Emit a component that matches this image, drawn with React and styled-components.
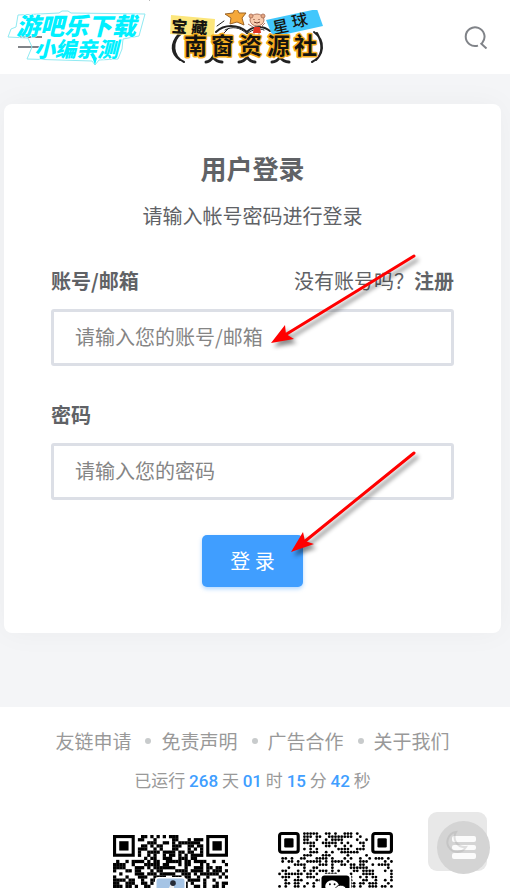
import React from "react";
import styled, { createGlobalStyle } from "styled-components";

const GlobalStyle = createGlobalStyle`
  *, *::before, *::after { box-sizing: border-box; }
  body {
    margin: 0;
    background: #fff;
    color: #606266;
    font-family: "Noto Sans CJK SC", sans-serif;
    font-size: 20px;
    line-height: 28px;
  }
  a { color: inherit; text-decoration: none; }
`;

const Page = styled.div`
  position: relative;
  display: flex;
  flex-direction: column;
  min-height: 100vh;
  overflow: hidden;
  background: #f4f5f7;
`;

const Header = styled.header`
  display: flex;
  align-items: center;
  justify-content: space-between;
  padding: 10px 22px 10px 18px;
  background: #fff;
`;

const IconButton = styled.button`
  display: flex;
  padding: 0;
  border: 0;
  background: none;
  color: #808388;
  cursor: pointer;
`;

const LogoLink = styled.a`
  display: flex;
`;

const Main = styled.main`
  padding: 30px 9px 74px 4px;
`;

const Card = styled.section`
  padding: 46px 47px;
  border-radius: 8px;
  background: #fff;
  box-shadow: 0 0 30px rgba(0, 0, 0, 0.04);
`;

const Title = styled.h1`
  margin: 0 0 16px;
  font-size: 26px;
  line-height: 36px;
  font-weight: 700;
  text-align: center;
`;

const Subtitle = styled.p`
  margin: 0 0 37px;
  text-align: center;
`;

const Form = styled.form`
  display: flex;
  flex-direction: column;
  gap: 35px;
`;

const Field = styled.div`
  display: flex;
  flex-direction: column;
  gap: 14px;
`;

const FieldHead = styled.div`
  display: flex;
  justify-content: space-between;
`;

const Label = styled.label`
  font-weight: 700;
`;

const RegisterLink = styled.a`
  font-weight: 700;
`;

const TextInput = styled.input`
  width: 100%;
  height: 57px;
  padding: 0 21px 2px;
  border: 3px solid #dcdfe6;
  border-radius: 3px;
  outline: 0;
  background: #fff;
  color: #606266;
  font: inherit;
  &::placeholder { color: #858585; opacity: 1; }
`;

const SubmitButton = styled.button`
  align-self: center;
  padding: 12px 28px;
  border: 0;
  border-radius: 5px;
  background: #409eff;
  box-shadow: 0 2px 4px rgba(64, 158, 255, 0.4);
  color: #fff;
  font: inherit;
  cursor: pointer;
`;

const Footer = styled.footer`
  flex: 1;
  padding: 20px 5px 0 0;
  background: #fff;
  color: #999;
`;

const FooterNav = styled.nav`
  display: flex;
  justify-content: center;
  align-items: center;
  font-size: 19px;
`;

const FooterLink = styled.a`
  display: flex;
  align-items: center;
  & + &::before {
    content: "";
    width: 6px;
    height: 6px;
    margin: 0 10px 0 14px;
    border-radius: 50%;
    background: #c8cbcc;
  }
`;

const Uptime = styled.p`
  margin: 13px 0 39px;
  font-size: 17px;
  line-height: 24px;
  text-align: center;
`;

const Count = styled.b`
  color: #409eff;
  font-family: Roboto, sans-serif;
  font-weight: 500;
`;

const Codes = styled.div`
  display: flex;
  justify-content: center;
  align-items: flex-end;
  gap: 50px;
`;

const CodeImage = styled.svg`
  display: block;
  width: 115px;
`;

const Watermark = styled.svg`
  position: absolute;
  top: 0;
  left: 0;
  pointer-events: none;
`;

const Arrow = styled.svg`
  position: absolute;
  top: ${(p) => p.$top}px;
  left: ${(p) => p.$left}px;
  overflow: visible;
  pointer-events: none;
  filter: drop-shadow(3px 4px 2px rgba(0, 0, 0, 0.45));
`;

const FloatingTools = styled.div`
  position: fixed;
  right: 20px;
  bottom: 14px;
`;

const ThemeButton = styled.button`
  display: block;
  width: 59px;
  height: 59px;
  margin: 0 3px 3px 0;
  padding: 0;
  border: 0;
  border-radius: 9px;
  background: #e8e8e8;
`;

const MenuBubble = styled.button`
  position: absolute;
  right: 0;
  bottom: 0;
  width: 53px;
  height: 53px;
  padding: 0;
  border: 0;
  border-radius: 50%;
  background: #d4d4d4;
`;

function SiteLogo() {
  return (
    <svg width="166" height="54" viewBox="170 10 166 54" role="img" aria-label="宝藏星球 南窗资源社">
      <g fill="none" stroke="#222" strokeWidth="2" strokeLinecap="round">
        <path d="M182 33C171 41 172 56 184 62M179 34C170 44 171 54 180 60" />
        <path d="M314 32C326 41 324 56 312 62M317 33C323 44 323 53 316 60" />
        <path d="M216 32C224 24 238 24 247 32C252 26 263 25 270 31" />
        <path d="M225 30C232 26 240 27 247 34C252 29 260 28 264 30M217 26L224 21M223 34L228 29" strokeWidth="1" />
        <path d="M206 62C209 62 211 60 213 57C215 60 218 62 222 62M239 62C243 62 245 60 247 57C249 60 252 62 255 62M272 62C276 62 278 60 280 57C282 60 286 62 289 62" strokeWidth="3" />
      </g>
      <path d="M236 7L239 13L246 13L242 18L244 25L237 22L230 24L231 18L225 14L233 13Z" fill="#f5a83a" stroke="#9c6426" />
      <g stroke="#b37960" strokeWidth="1" fill="none">
        <path d="M253 27l-5-3M261 27l4-4M254 32v3M259 32v3" />
        <ellipse cx="257" cy="20" rx="7" ry="6" fill="#f8cbad" />
        <circle cx="251" cy="16" r="2" fill="#e7a782" />
        <circle cx="263" cy="16" r="2" fill="#e7a782" />
        <path d="M254 22q3 2 6 0M254 19v1M259 19v1" stroke="#743c2c" />
      </g>
      <path d="M254 27h6l1 6h-8Z" fill="#e33422" />
      <path d="M171 15L215 19L214 37L170 34Z" fill="#fce67c" />
      <path d="M266 20L317 9L323 26L273 37Z" fill="#42c7fc" />
      <g fontFamily='"Noto Sans CJK SC", sans-serif' fontWeight="900" fill="#16140f">
        <text x="171" y="32" fontSize="16" transform="rotate(4 171 32)">宝</text>
        <text x="191" y="33" fontSize="16" transform="rotate(4 191 33)">藏</text>
        <text x="274" y="34" fontSize="16" fontWeight="500" transform="rotate(-12 274 34)">星</text>
        <text x="293" y="28" fontSize="16" fontWeight="500" transform="rotate(-12 293 28)">球</text>
        <text
          x="184 211 239 267 294"
          y="54"
          fontSize="23"
          fontWeight="700"
          stroke="#f5ad20"
          strokeWidth="3"
          strokeLinejoin="round"
          paintOrder="stroke"
        >
          南窗资源社
        </text>
      </g>
    </svg>
  );
}

const SIZE = 37;
const ROWS = 19;

function inFinder(x, y) {
  return y < 8 && (x < 8 || x > SIZE - 9);
}

function isDark(x, y, seed) {
  let h = (x * 374761393 + y * 668265263 + seed * 69069) | 0;
  h = Math.imul(h ^ (h >>> 13), 1274126177);
  return ((h ^ (h >>> 16)) & 1023) < 530;
}

function modules(seed, rows) {
  const cells = [];
  for (let y = 0; y < rows; y += 1) {
    for (let x = 0; x < SIZE; x += 1) {
      if (!inFinder(x, y) && isDark(x, y, seed)) cells.push([x, y]);
    }
  }
  return cells;
}

function Finder({ x, round }) {
  return (
    <g>
      <rect x={x + 0.5} y="0.5" width="6" height="6" rx={round ? 0.7 : 0} fill="none" stroke="#000" />
      <rect x={x + 2} y="2" width="3" height="3" rx={round ? 0.4 : 0} />
    </g>
  );
}

function CommunityCode() {
  return (
    <CodeImage viewBox={`0 0 ${SIZE} 17`} role="img" aria-label="二维码">
      <Finder x={0} />
      <Finder x={30} />
      {modules(5, 17).map(([x, y]) => (
        <rect key={`${x}-${y}`} x={x} y={y} width="1.05" height="1.05" />
      ))}
      <rect x="13.5" y="13.5" width="10" height="6" rx="1" fill="#fff" />
      <rect x="14" y="14" width="9" height="5" rx="0.7" fill="#a5c4e5" />
      <path d="M17.8 17.4l.7-1.4 1-.3.2 1.7z" fill="#eee" />
      <circle cx="19.3" cy="15.5" r="0.9" fill="#252a35" />
    </CodeImage>
  );
}

function WechatCode() {
  return (
    <CodeImage viewBox={`0 0 ${SIZE} 18`} role="img" aria-label="微信二维码">
      <Finder x={0} round />
      <Finder x={30} round />
      {modules(11, ROWS).map(([x, y]) => (
        <circle key={`${x}-${y}`} cx={x + 0.5} cy={y + 0.5} r="0.45" />
      ))}
      <rect x="13.4" y="13.4" width="10.2" height="6" rx="1.2" fill="#fff" />
      <rect x="14" y="14" width="9" height="6" rx="1" />
      <ellipse cx="17.4" cy="17.4" rx="2.2" ry="1.9" fill="#fff" />
      <ellipse cx="20.2" cy="18.4" rx="1.7" ry="1.3" fill="#fff" stroke="#000" strokeWidth="0.3" />
      <circle cx="16.7" cy="16.8" r="0.3" />
      <circle cx="18.2" cy="16.8" r="0.3" />
    </CodeImage>
  );
}

function FooterCount({ value, unit }) {
  return (
    <>
      {" "}
      <Count>{value}</Count> {unit}
    </>
  );
}

export default function App() {
  return (
    <>
      <GlobalStyle />
      <Page>
        <Header>
          <IconButton type="button" aria-label="菜单">
            <svg width="24" height="24" viewBox="0 0 24 24" fill="none" stroke="currentColor" strokeWidth="2">
              <path d="M0 12H24M0 22H24" />
            </svg>
          </IconButton>
          <LogoLink href="#home">
            <SiteLogo />
          </LogoLink>
          <IconButton type="button" aria-label="搜索">
            <svg width="24" height="24" viewBox="0 0 24 24" fill="none" stroke="currentColor" strokeWidth="2">
              <path d="M14 20.6A9.4 9.4 0 1 1 18.4 17.6L17.3 18.8L22.5 23.5" />
            </svg>
          </IconButton>
        </Header>

        <Main>
          <Card>
            <Title>用户登录</Title>
            <Subtitle>请输入帐号密码进行登录</Subtitle>
            <Form onSubmit={(e) => e.preventDefault()}>
              <Field>
                <FieldHead>
                  <Label htmlFor="account">账号/邮箱</Label>
                  <span>
                    没有账号吗？<RegisterLink href="#register">注册</RegisterLink>
                  </span>
                </FieldHead>
                <TextInput id="account" type="text" placeholder="请输入您的账号/邮箱" />
              </Field>
              <Field>
                <Label htmlFor="password">密码</Label>
                <TextInput id="password" type="password" placeholder="请输入您的密码" />
              </Field>
              <SubmitButton type="submit">登 录</SubmitButton>
            </Form>
          </Card>
        </Main>

        <Footer>
          <FooterNav>
            <FooterLink href="#links">友链申请</FooterLink>
            <FooterLink href="#disclaimer">免责声明</FooterLink>
            <FooterLink href="#ads">广告合作</FooterLink>
            <FooterLink href="#about">关于我们</FooterLink>
          </FooterNav>
          <Uptime>
            已运行
            <FooterCount value="268" unit="天" />
            <FooterCount value="01" unit="时" />
            <FooterCount value="15" unit="分" />
            <FooterCount value="42" unit="秒" />
          </Uptime>
          <Codes>
            <CommunityCode />
            <WechatCode />
          </Codes>
        </Footer>

        <Watermark width="152" height="72" viewBox="0 0 152 72" role="img" aria-label="游吧乐下载 小编亲测">
          <path
            d="M18 15L59 13L62 11H68L71 13L145 14L139 36L123 39L122 49L118 59L99 60L95 65L92 61L27 59L32 47L28 38L8 37L11 29L16 27Z"
            fill="none"
            stroke="#8feaf2"
          />
          <g
            fontFamily='"Noto Sans CJK SC", sans-serif'
            fontWeight="900"
            fontStyle="italic"
            fill="#00f0ff"
            stroke="#fff"
            strokeWidth="1"
            paintOrder="stroke"
          >
            <text x="16" y="35" fontSize="24">游吧乐下载</text>
            <text x="34" y="57" fontSize="21">小编亲测</text>
          </g>
          <path d="M91 54L95 65L97 58" fill="#00f0ff" />
          <path d="M149 0h1" stroke="#777" />
        </Watermark>

        <Arrow $left={271} $top={256} width="144" height="88" viewBox="0 0 144 88">
          <path d="M143 0L14 79" stroke="#f00" strokeWidth="3" strokeLinecap="round" />
          <path d="M0 87L14 69L15 78L23 83Z" fill="#f00" />
        </Arrow>
        <Arrow $left={291} $top={453} width="124" height="100" viewBox="0 0 124 100">
          <path d="M123 0L13 89" stroke="#f00" strokeWidth="3" strokeLinecap="round" />
          <path d="M0 99L12 79L14 88L23 91Z" fill="#f00" />
        </Arrow>

        <FloatingTools>
          <ThemeButton type="button" aria-label="切换主题" />
          <MenuBubble type="button" aria-label="快捷菜单">
            <svg width="53" height="53" viewBox="0 0 53 53">
              <g fill="#fbfbfb">
                <rect x="15" y="15" width="24" height="6" rx="2" />
                <rect x="15" y="24" width="24" height="5" rx="2" />
                <rect x="15" y="32" width="24" height="6" rx="2" />
              </g>
              <path
                d="M19 11A10 10 0 1 0 29 26A10 10 0 0 1 19 11Z"
                fill="none"
                stroke="#aaa"
                strokeOpacity="0.35"
                strokeWidth="2"
              />
            </svg>
          </MenuBubble>
        </FloatingTools>
      </Page>
    </>
  );
}
